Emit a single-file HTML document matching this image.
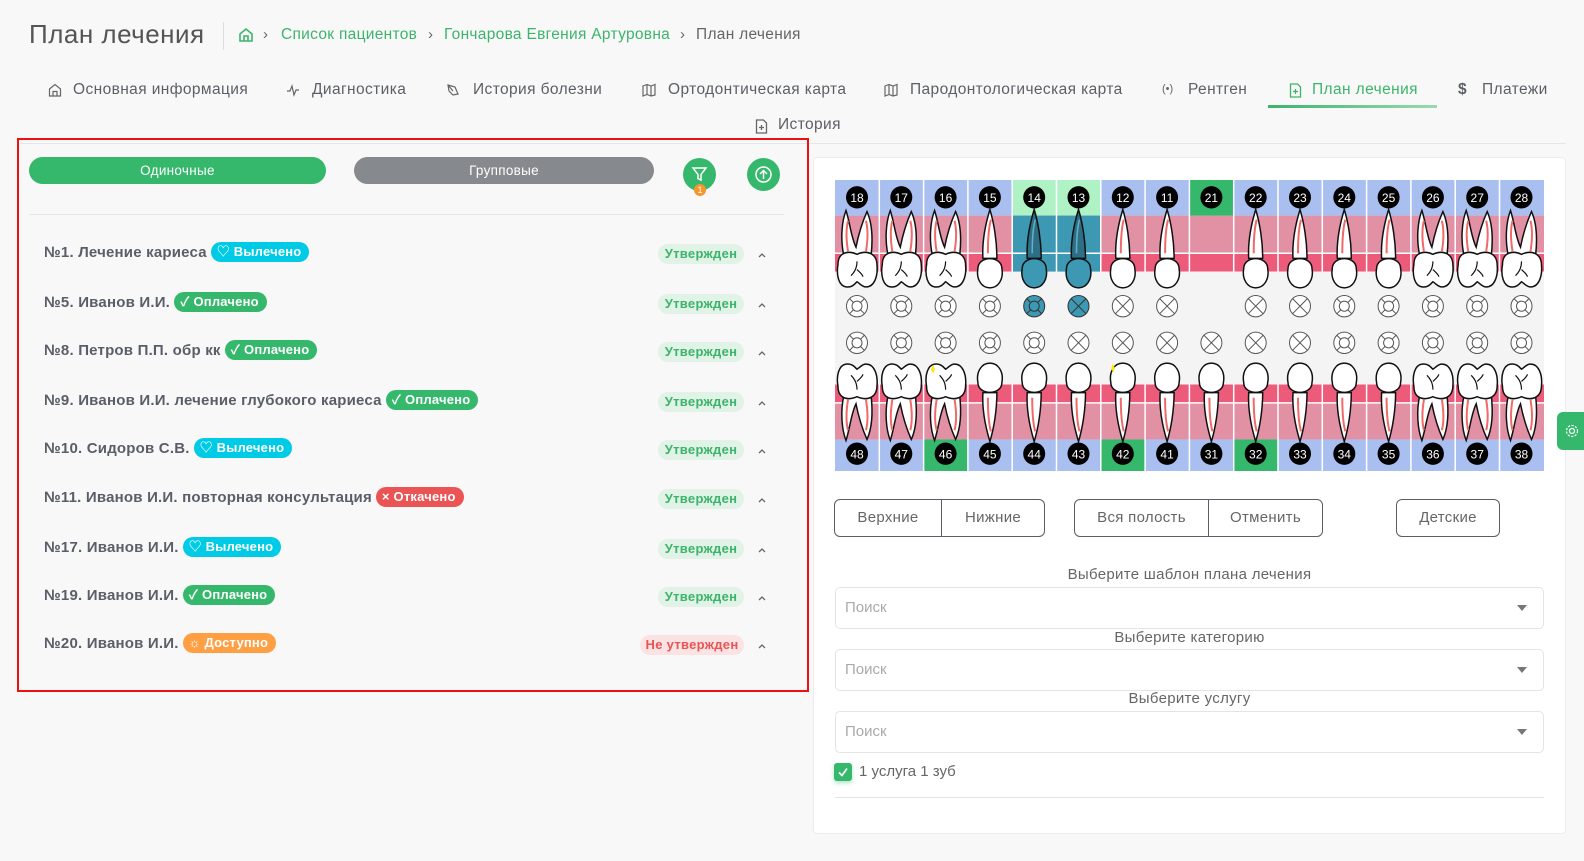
<!DOCTYPE html>
<html><head><meta charset="utf-8"><style>
*{box-sizing:border-box;margin:0;padding:0}
body{width:1584px;height:861px;background:#f8f8f8;font-family:"Liberation Sans","Noto Sans CJK SC",sans-serif;color:#5c5f66;position:relative;overflow:hidden}
.a{position:absolute;white-space:nowrap}
.tab{font-size:15.5px;letter-spacing:.4px;color:#5c5f66;top:81px}
.ico{position:absolute;top:83px}
.red{position:absolute;left:17px;top:138px;width:792px;height:554px;border:2px solid #ee1111}
.pill{position:absolute;height:27px;border-radius:14px;color:#fff;font-size:13.5px;text-align:center;line-height:27px;letter-spacing:.3px}
.row{position:absolute;left:44px;font-size:15px;font-weight:bold;color:#5a5e68;letter-spacing:.2px;height:22px;line-height:22px}
.bd{display:inline-block;height:20px;line-height:20px;border-radius:10px;color:#fff;font-size:13px;padding:0 8px 0 6px;margin-left:4px;vertical-align:1px;letter-spacing:.2px}
.st{position:absolute;left:658px;width:86px;height:20px;line-height:20px;border-radius:10px;background:#e1f2e6;color:#3cb46c;font-size:13px;font-weight:bold;text-align:center;letter-spacing:.3px}
.card{position:absolute;left:813px;top:157px;width:753px;height:677px;background:#fff;border:1px solid #ececec;border-radius:4px}
.btn{position:absolute;top:499px;height:38px;border:1px solid #5a5d63;font-size:15px;color:#666;text-align:center;line-height:36px;letter-spacing:.3px}
.lbl{position:absolute;left:835px;width:709px;text-align:center;font-size:15px;color:#666;letter-spacing:.3px}
.sel{position:absolute;left:835px;width:709px;height:42px;border:1px solid #e4e4e4;border-radius:5px;font-size:15px;color:#aaa;padding-left:9px;line-height:40px}
.sel:after{content:"";position:absolute;right:16px;top:17px;border-left:5px solid transparent;border-right:5px solid transparent;border-top:6px solid #777}
</style></head><body>

<div class="a" style="left:29px;top:19px;font-size:26px;color:#555;letter-spacing:.5px">План лечения</div>
<div class="a" style="left:223px;top:22px;width:1px;height:28px;background:#ddd"></div>
<svg class="a" style="left:238px;top:27px" width="16" height="16" viewBox="0 0 16 16"><path d="M2 7 L8 2 L14 7 V14 H2 Z M6 14 V9 H10 V14" fill="none" stroke="#3cb46c" stroke-width="1.6"/></svg>
<div class="a" style="left:263px;top:26px;font-size:15px;color:#666">›</div>
<div class="a" style="left:281px;top:26px;font-size:15.5px;color:#3cb46c;letter-spacing:.3px">Список пациентов</div>
<div class="a" style="left:428px;top:26px;font-size:15px;color:#666">›</div>
<div class="a" style="left:444px;top:26px;font-size:15.5px;color:#3cb46c;letter-spacing:.3px">Гончарова Евгения Артуровна</div>
<div class="a" style="left:680px;top:26px;font-size:15px;color:#666">›</div>
<div class="a" style="left:696px;top:26px;font-size:15.5px;color:#666;letter-spacing:.3px">План лечения</div>

<!-- tabs -->
<svg class="ico" style="left:48px" width="14" height="14" viewBox="0 0 14 14"><path d="M1.5 6 L7 1.5 L12.5 6 V13 H1.5 Z M5 13 V8.5 H9 V13" fill="none" stroke="#666" stroke-width="1.2"/></svg>
<div class="a tab" style="left:73px">Основная информация</div>
<svg class="ico" style="left:286px" width="14" height="14" viewBox="0 0 14 14"><path d="M1 8 H4 L6 3 L8 12 L10 7 H13" fill="none" stroke="#666" stroke-width="1.2"/></svg>
<div class="a tab" style="left:312px">Диагностика</div>
<svg class="ico" style="left:446px" width="14" height="14" viewBox="0 0 14 14"><path d="M2 2 L9 4 L12 11 L7 12 L3 8 Z M2 2 L7 8" fill="none" stroke="#666" stroke-width="1.2"/></svg>
<div class="a tab" style="left:473px">История болезни</div>
<svg class="ico" style="left:642px" width="14" height="14" viewBox="0 0 14 14"><path d="M1 3 L5 1.5 L9 3 L13 1.5 V12 L9 13 L5 11.5 L1 13 Z M5 1.5 V11.5 M9 3 V13" fill="none" stroke="#666" stroke-width="1.2"/></svg>
<div class="a tab" style="left:668px">Ортодонтическая карта</div>
<svg class="ico" style="left:884px" width="14" height="14" viewBox="0 0 14 14"><path d="M1 3 L5 1.5 L9 3 L13 1.5 V12 L9 13 L5 11.5 L1 13 Z M5 1.5 V11.5 M9 3 V13" fill="none" stroke="#666" stroke-width="1.2"/></svg>
<div class="a tab" style="left:910px">Пародонтологическая карта</div>
<div class="a" style="left:1162px;top:83px;font-size:11px;color:#666">(•)</div>
<div class="a tab" style="left:1188px">Рентген</div>
<svg class="ico" style="left:1289px" width="13" height="15" viewBox="0 0 13 15"><path d="M1.5 1 H8.5 L11.5 4 V14 H1.5 Z M6.5 6 V11 M4 8.5 H9" fill="none" stroke="#3cb46c" stroke-width="1.3"/></svg>
<div class="a tab" style="left:1312px;color:#3cb46c">План лечения</div>
<div class="a" style="left:1268px;top:105px;width:169px;height:3px;background:linear-gradient(90deg,#3cb46c,#9ad9b0)"></div>
<div class="a tab" style="left:1458px;font-weight:bold">$</div>
<div class="a tab" style="left:1482px">Платежи</div>
<svg class="a" style="left:755px;top:119px" width="13" height="15" viewBox="0 0 13 15"><path d="M1.5 1 H8.5 L11.5 4 V14 H1.5 Z M6.5 6 V11 M4 8.5 H9" fill="none" stroke="#666" stroke-width="1.3"/></svg>
<div class="a tab" style="left:778px;top:116px">История</div>
<div class="a" style="left:20px;top:143px;width:1546px;height:1px;background:#e4e6ea"></div>

<!-- left panel -->
<div class="red"></div>
<div class="pill" style="left:29px;top:157px;width:297px;background:#35b86b">Одиночные</div>
<div class="pill" style="left:354px;top:157px;width:300px;background:#86898d">Групповые</div>
<div class="a" style="left:683px;top:158px;width:33px;height:33px;border-radius:50%;background:#35b86b"></div>
<svg class="a" style="left:691px;top:166px" width="17" height="17" viewBox="0 0 17 17"><path d="M2 2 H15 L10 8.5 V14 L7 12.5 V8.5 Z" fill="none" stroke="#fff" stroke-width="1.5"/></svg>
<div class="a" style="left:694px;top:184px;width:12px;height:12px;border-radius:50%;background:#f7962e;color:#fff;font-size:9px;line-height:12px;text-align:center">1</div>
<div class="a" style="left:747px;top:158px;width:33px;height:33px;border-radius:50%;background:#35b86b"></div>
<svg class="a" style="left:754px;top:165px" width="19" height="19" viewBox="0 0 19 19"><circle cx="9.5" cy="9.5" r="7.5" fill="none" stroke="#fff" stroke-width="1.5"/><path d="M9.5 14 V5.5 M6 9 L9.5 5.5 L13 9" fill="none" stroke="#fff" stroke-width="1.5"/></svg>
<div class="a" style="left:29px;top:214px;width:755px;height:1px;background:#e4e6ea"></div>

<div class="row" style="top:242px">№1. Лечение кариеса<span class="bd" style="background:#00cbe6">♡ Вылечено</span></div>
<div class="row" style="top:292px">№5. Иванов И.И.<span class="bd" style="background:#35b86b">✓ Оплачено</span></div>
<div class="row" style="top:340px">№8. Петров П.П. обр кк<span class="bd" style="background:#35b86b">✓ Оплачено</span></div>
<div class="row" style="top:390px">№9. Иванов И.И. лечение глубокого кариеса<span class="bd" style="background:#35b86b">✓ Оплачено</span></div>
<div class="row" style="top:438px">№10. Сидоров С.В.<span class="bd" style="background:#00cbe6">♡ Вылечено</span></div>
<div class="row" style="top:487px">№11. Иванов И.И. повторная консультация<span class="bd" style="background:#ea5455">× Откачено</span></div>
<div class="row" style="top:537px">№17. Иванов И.И.<span class="bd" style="background:#00cbe6">♡ Вылечено</span></div>
<div class="row" style="top:585px">№19. Иванов И.И.<span class="bd" style="background:#35b86b">✓ Оплачено</span></div>
<div class="row" style="top:633px">№20. Иванов И.И.<span class="bd" style="background:#ff9f43">☼ Доступно</span></div>

<div class="st" style="top:244px">Утвержден</div>
<div class="st" style="top:294px">Утвержден</div>
<div class="st" style="top:342px">Утвержден</div>
<div class="st" style="top:392px">Утвержден</div>
<div class="st" style="top:440px">Утвержден</div>
<div class="st" style="top:489px">Утвержден</div>
<div class="st" style="top:539px">Утвержден</div>
<div class="st" style="top:587px">Утвержден</div>
<div class="st" style="top:635px;left:640px;width:104px;background:#fbe3e4;color:#ea5455">Не утвержден</div>
<svg class="a" style="left:757px;top:249px" width="10" height="410" viewBox="0 0 10 410"><g fill="none" stroke="#666" stroke-width="1.3"><path d="M2 8 L5 5 L8 8"/><path d="M2 58 L5 55 L8 58"/><path d="M2 106 L5 103 L8 106"/><path d="M2 156 L5 153 L8 156"/><path d="M2 204 L5 201 L8 204"/><path d="M2 253 L5 250 L8 253"/><path d="M2 303 L5 300 L8 303"/><path d="M2 351 L5 348 L8 351"/><path d="M2 399 L5 396 L8 399"/></g></svg>

<!-- right card -->
<div class="card"></div>
<svg class="a" style="left:835px;top:180px" width="709" height="291" viewBox="0 0 709 286" preserveAspectRatio="none">
<defs>
<g id="um">
 <path d="M9,75 C5,58 7,40 11,30 C15,42 16,56 21,66 C23,56 27,42 32,31 C37,42 38,58 36,75 Z" fill="#fff" stroke="#111" stroke-width="1.5"/>
 <path d="M13,70 C11,58 11,48 13,40 M31,70 C33,58 33,48 31,40" stroke="#f06a6a" stroke-width="2" fill="none"/>
 <path d="M3,83 C3,71 13,69 22,73 C31,69 42,71 42,84 C43,95 39,106 30,105 C26,104 24,101 22,100 C20,102 17,106 11,105 C4,104 1,94 3,83 Z" fill="#fff" stroke="#111" stroke-width="1.5"/>
 <path d="M22,80 C22,88 18,92 16,94 M22,88 C24,90 27,92 28,95" stroke="#111" stroke-width="1.2" fill="none"/>
</g>
<g id="us">
 <path d="M15,77 C14,60 18,42 22,29 C26,42 29,60 29,77 Z" fill="#fff" stroke="#111" stroke-width="1.5"/>
 <path d="M20,72 C20,58 21,46 23,39" stroke="#f06a6a" stroke-width="2" fill="none"/>
 <path d="M10,87 C10,74 34,74 34,87 C36,98 30,106 22,106 C14,106 8,98 10,87 Z" fill="#fff" stroke="#111" stroke-width="1.5"/>
</g>
<g id="ut">
 <path d="M15,77 C14,60 18,42 22,29 C26,42 29,60 29,77 Z" fill="#2f6f86" stroke="#111" stroke-width="1.5"/>
 <path d="M20,72 C20,58 21,46 23,39" stroke="#5fb3c9" stroke-width="1.5" fill="none"/>
 <path d="M10,87 C10,74 34,74 34,87 C36,98 30,106 22,106 C14,106 8,98 10,87 Z" fill="#3c98b3" stroke="#111" stroke-width="1.5"/>
</g>
<g id="rg"><circle r="10.5" fill="#fff" stroke="#555" stroke-width="1"/><circle r="5" fill="none" stroke="#555" stroke-width="1"/><path d="M3.5,3.5 L7.4,7.4 M-3.5,3.5 L-7.4,7.4 M3.5,-3.5 L7.4,-7.4 M-3.5,-3.5 L-7.4,-7.4" stroke="#555" stroke-width="1"/></g>
<g id="xx"><circle r="10.5" fill="#fff" stroke="#555" stroke-width="1"/><path d="M-7.4,-7.4 L7.4,7.4 M7.4,-7.4 L-7.4,7.4" stroke="#555" stroke-width="1"/></g>
</defs>
<rect x="0" y="0" width="709" height="35" fill="#a9bff0"/>
<rect x="0" y="35" width="709" height="37" fill="#e290a4"/>
<rect x="0" y="72" width="709" height="18" fill="#ec5b7a"/>
<rect x="0" y="90" width="709" height="111" fill="#f4f4f4"/>
<rect x="0" y="201" width="709" height="18" fill="#ec5b7a"/>
<rect x="0" y="219" width="709" height="36" fill="#e290a4"/>
<rect x="0" y="255" width="709" height="31" fill="#a9bff0"/>
<rect x="177.2" y="0" width="88.6" height="35" fill="#aef2c5"/>
<rect x="177.2" y="35" width="88.6" height="55" fill="#3c98b3"/>
<rect x="354.4" y="0" width="44.3" height="35" fill="#35b86b"/>
<rect x="88.6" y="255" width="44.3" height="31" fill="#35b86b"/>
<rect x="265.8" y="255" width="44.3" height="31" fill="#35b86b"/>
<rect x="398.7" y="255" width="44.3" height="31" fill="#35b86b"/>
<g stroke="#fff" stroke-width="1.5">
<path d="M0,72 H709 M0,219 H709"/>
<path d="M44.3,0V90M88.6,0V90M132.9,0V90M177.2,0V90M221.5,0V90M265.8,0V90M310.1,0V90M354.4,0V90M398.7,0V90M443,0V90M487.3,0V90M531.6,0V90M575.9,0V90M620.2,0V90M664.5,0V90"/>
<path d="M44.3,201V286M88.6,201V286M132.9,201V286M177.2,201V286M221.5,201V286M265.8,201V286M310.1,201V286M354.4,201V286M398.7,201V286M443,201V286M487.3,201V286M531.6,201V286M575.9,201V286M620.2,201V286M664.5,201V286"/>
</g>
<use href="#um" x="0"/><use href="#um" x="44.3"/><use href="#um" x="88.6"/><use href="#us" x="132.9"/>
<use href="#ut" x="177.2"/><use href="#ut" x="221.5"/><use href="#us" x="265.8"/><use href="#us" x="310.1"/>
<use href="#us" x="398.7"/><use href="#us" x="443"/><use href="#us" x="487.3"/><use href="#us" x="531.6"/>
<use href="#um" x="575.9"/><use href="#um" x="620.2"/><use href="#um" x="664.5"/>
<g transform="matrix(1,0,0,-1,0,286)">
<use href="#um" x="0"/><use href="#um" x="44.3"/><use href="#um" x="88.6"/><use href="#us" x="132.9"/>
<use href="#us" x="177.2"/><use href="#us" x="221.5"/><use href="#us" x="265.8"/><use href="#us" x="310.1"/>
<use href="#us" x="354.4"/><use href="#us" x="398.7"/><use href="#us" x="443"/><use href="#us" x="487.3"/><use href="#us" x="531.6"/>
<use href="#um" x="575.9"/><use href="#um" x="620.2"/><use href="#um" x="664.5"/>
</g>
<path d="M96,186 l2,-4 l2,4 l-2,4 z" fill="#ffe600"/>
<path d="M276,185 l2,-4 l2,4 l-2,4 z" fill="#ffe600"/>
<use href="#rg" x="22" y="124"/><use href="#rg" x="66.3" y="124"/><use href="#rg" x="110.6" y="124"/><use href="#rg" x="154.9" y="124"/>
<g transform="translate(199.2,124)"><circle r="10.5" fill="#3c98b3" stroke="#333"/><circle r="5" fill="none" stroke="#333"/><path d="M3.5,3.5 L7.4,7.4 M-3.5,3.5 L-7.4,7.4 M3.5,-3.5 L7.4,-7.4 M-3.5,-3.5 L-7.4,-7.4" stroke="#333"/></g>
<g transform="translate(243.5,124)"><circle r="10.5" fill="#3c98b3" stroke="#333"/><path d="M-7.4,-7.4 L7.4,7.4 M7.4,-7.4 L-7.4,7.4" stroke="#333"/></g>
<use href="#xx" x="287.8" y="124"/><use href="#xx" x="332.1" y="124"/>
<use href="#xx" x="420.7" y="124"/><use href="#xx" x="465" y="124"/>
<use href="#rg" x="509.3" y="124"/><use href="#rg" x="553.6" y="124"/><use href="#rg" x="597.9" y="124"/><use href="#rg" x="642.2" y="124"/><use href="#rg" x="686.5" y="124"/>
<use href="#rg" x="22" y="160"/><use href="#rg" x="66.3" y="160"/><use href="#rg" x="110.6" y="160"/><use href="#rg" x="154.9" y="160"/><use href="#rg" x="199.2" y="160"/>
<use href="#xx" x="243.5" y="160"/><use href="#xx" x="287.8" y="160"/><use href="#xx" x="332.1" y="160"/><use href="#xx" x="376.4" y="160"/><use href="#xx" x="420.7" y="160"/><use href="#xx" x="465" y="160"/>
<use href="#rg" x="509.3" y="160"/><use href="#rg" x="553.6" y="160"/><use href="#rg" x="597.9" y="160"/><use href="#rg" x="642.2" y="160"/><use href="#rg" x="686.5" y="160"/>
<g fill="#000">
<circle cx="22" cy="17" r="11"/><circle cx="66.3" cy="17" r="11"/><circle cx="110.6" cy="17" r="11"/><circle cx="154.9" cy="17" r="11"/><circle cx="199.2" cy="17" r="11"/><circle cx="243.5" cy="17" r="11"/><circle cx="287.8" cy="17" r="11"/><circle cx="332.1" cy="17" r="11"/><circle cx="376.4" cy="17" r="11"/><circle cx="420.7" cy="17" r="11"/><circle cx="465" cy="17" r="11"/><circle cx="509.3" cy="17" r="11"/><circle cx="553.6" cy="17" r="11"/><circle cx="597.9" cy="17" r="11"/><circle cx="642.2" cy="17" r="11"/><circle cx="686.5" cy="17" r="11"/>
<circle cx="22" cy="269" r="11"/><circle cx="66.3" cy="269" r="11"/><circle cx="110.6" cy="269" r="11"/><circle cx="154.9" cy="269" r="11"/><circle cx="199.2" cy="269" r="11"/><circle cx="243.5" cy="269" r="11"/><circle cx="287.8" cy="269" r="11"/><circle cx="332.1" cy="269" r="11"/><circle cx="376.4" cy="269" r="11"/><circle cx="420.7" cy="269" r="11"/><circle cx="465" cy="269" r="11"/><circle cx="509.3" cy="269" r="11"/><circle cx="553.6" cy="269" r="11"/><circle cx="597.9" cy="269" r="11"/><circle cx="642.2" cy="269" r="11"/><circle cx="686.5" cy="269" r="11"/>
</g>
<g fill="#fff" font-family="Liberation Sans, sans-serif" font-size="12" text-anchor="middle">
<text x="22" y="21.5">18</text><text x="66.3" y="21.5">17</text><text x="110.6" y="21.5">16</text><text x="154.9" y="21.5">15</text><text x="199.2" y="21.5">14</text><text x="243.5" y="21.5">13</text><text x="287.8" y="21.5">12</text><text x="332.1" y="21.5">11</text><text x="376.4" y="21.5">21</text><text x="420.7" y="21.5">22</text><text x="465" y="21.5">23</text><text x="509.3" y="21.5">24</text><text x="553.6" y="21.5">25</text><text x="597.9" y="21.5">26</text><text x="642.2" y="21.5">27</text><text x="686.5" y="21.5">28</text>
<text x="22" y="273.5">48</text><text x="66.3" y="273.5">47</text><text x="110.6" y="273.5">46</text><text x="154.9" y="273.5">45</text><text x="199.2" y="273.5">44</text><text x="243.5" y="273.5">43</text><text x="287.8" y="273.5">42</text><text x="332.1" y="273.5">41</text><text x="376.4" y="273.5">31</text><text x="420.7" y="273.5">32</text><text x="465" y="273.5">33</text><text x="509.3" y="273.5">34</text><text x="553.6" y="273.5">35</text><text x="597.9" y="273.5">36</text><text x="642.2" y="273.5">37</text><text x="686.5" y="273.5">38</text>
</g>
</svg>

<div class="btn" style="left:834px;width:108px;border-radius:6px 0 0 6px">Верхние</div>
<div class="btn" style="left:941px;width:104px;border-radius:0 6px 6px 0">Нижние</div>
<div class="btn" style="left:1074px;width:135px;border-radius:6px 0 0 6px">Вся полость</div>
<div class="btn" style="left:1208px;width:115px;border-radius:0 6px 6px 0">Отменить</div>
<div class="btn" style="left:1396px;width:104px;border-radius:6px">Детские</div>

<div class="lbl" style="top:566px">Выберите шаблон плана лечения</div>
<div class="sel" style="top:587px">Поиск</div>
<div class="lbl" style="top:629px">Выберите категорию</div>
<div class="sel" style="top:649px">Поиск</div>
<div class="lbl" style="top:690px">Выберите услугу</div>
<div class="sel" style="top:711px">Поиск</div>
<div class="a" style="left:834px;top:763px;width:18px;height:18px;border-radius:3px;background:#35b86b;box-shadow:0 2px 4px rgba(53,184,107,.4)"></div>
<svg class="a" style="left:837px;top:766px" width="12" height="12" viewBox="0 0 12 12"><path d="M2 6.5 L5 9.5 L10 2.5" fill="none" stroke="#fff" stroke-width="1.6"/></svg>
<div class="a" style="left:859px;top:763px;font-size:15px;color:#666">1 услуга 1 зуб</div>
<div class="a" style="left:835px;top:797px;width:709px;height:1px;background:#e4e4e4"></div>

<div class="a" style="left:1557px;top:412px;width:30px;height:38px;border-radius:6px 0 0 6px;background:#35b86b"></div>
<svg class="a" style="left:1564px;top:423px" width="16" height="16" viewBox="0 0 16 16"><circle cx="8" cy="8" r="2.5" fill="none" stroke="#fff" stroke-width="1.2"/><circle cx="8" cy="8" r="5.5" fill="none" stroke="#fff" stroke-width="1.2" stroke-dasharray="2.2 1.4"/></svg>
</body></html>
